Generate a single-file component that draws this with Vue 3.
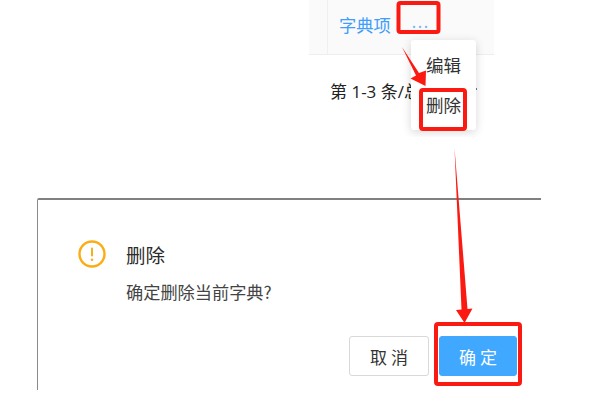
<template>
  <div class="page">
    <div class="table-crop">
      <div class="table-head">
        <a class="link">字典项</a>
        <span class="more">...</span>
      </div>
      <div class="pager-row">
        <span class="pager">第 1-3 条/总</span>
        <i class="pager-end"></i>
      </div>
      <ul class="menu">
        <li>编辑</li>
        <li>删除</li>
      </ul>
    </div>

    <div class="dialog">
      <div class="dialog-title">
        <svg class="warn" width="28" height="28" viewBox="0 0 28 28">
          <circle cx="14" cy="14" r="12.5" fill="none" stroke="#faad14" stroke-width="2.4" />
          <rect x="13" y="7.5" width="2" height="9" rx="1" fill="#faad14" />
          <circle cx="14" cy="19.8" r="1.3" fill="#faad14" />
        </svg>
        <span>删除</span>
      </div>
      <p class="dialog-msg">确定删除当前字典?</p>
      <div class="dialog-actions">
        <button class="btn">取 消</button>
        <button class="btn primary">确 定</button>
      </div>
    </div>

    <!-- red annotations drawn on top of the screenshot -->
    <svg class="marks" width="614" height="406" viewBox="0 0 614 406">
      <g fill="none" stroke="#fb1a12" stroke-width="4" stroke-linejoin="round">
        <rect x="398.500" y="3" width="40" height="29" rx="2" />
        <rect x="421" y="90" width="44" height="39" rx="2" />
        <rect x="436" y="324" width="84" height="60" rx="2" />
      </g>
      <g fill="#fb1a12">
        <path d="M402 47 L419 73 L426 70.500 L425.500 86 L410.500 78.500 L416 75.500 Z" />
        <path d="M454.500 148 L467.500 309 L472.500 308.500 L464.500 323 L456 310 L461.500 309.500 Z" />
      </g>
    </svg>
  </div>
</template>

<script setup>
</script>

<style>
html,
body {
  margin: 0;
  background: #fff;
}
</style>

<style scoped>
.page {
  position: relative;
  width: 614px;
  height: 406px;
  overflow: hidden;
  background: #fff;
  font-family: "Noto Sans CJK SC", "Noto Sans", sans-serif;
  color: #333;
}

.marks {
  position: absolute;
  left: 0;
  top: 0;
}

.table-crop {
  position: relative;
  width: 185px;
  height: 137px;
  margin-left: 309px;
  overflow: hidden;
}

.table-head {
  display: flex;
  align-items: center;
  gap: 21px;
  height: 55px;
  padding: 0 0 5px 30px;
  box-sizing: border-box;
  background: #fafafa;
  border-bottom: 1px solid #eee;
  position: relative;
}

.table-head::before {
  content: "";
  position: absolute;
  left: 18px;
  top: 0;
  bottom: 0;
  width: 1px;
  background: #f0f0f0;
}

.link {
  color: #3f9dfb;
  font-size: 17.300px;
}

.more {
  color: #6db6fb;
  font-size: 16px;
  letter-spacing: 1.500px;
  line-height: 1;
  margin-top: -8px;
}

.pager-row {
  display: flex;
  align-items: center;
  justify-content: space-between;
  height: 26px;
  margin: 22px 17px 0 21px;
}

.pager {
  width: 81px;
  overflow: hidden;
  font-family: "Open Sans", "Noto Sans CJK SC", sans-serif;
  font-size: 17px;
  color: #222;
  white-space: nowrap;
}

.pager-end {
  width: 2px;
  height: 2px;
  margin-top: -3px;
  background: #6b7f99;
}

.menu {
  position: absolute;
  left: 102px;
  top: 40px;
  width: 65px;
  height: 90px;
  margin: 0;
  padding: 5px 0;
  box-sizing: border-box;
  list-style: none;
  background: #fff;
  border-radius: 3px;
  box-shadow: 0 2px 10px rgba(0, 0, 0, 0.16);
  font-size: 17.500px;
  text-align: center;
}

.menu li {
  height: 40px;
  line-height: 40px;
}

.dialog {
  width: 504px;
  height: 192px;
  margin: 61px 0 0 37px;
  border-top: 2px solid #808080;
  border-left: 1px solid #8a8a8a;
  border-top-left-radius: 2px;
  box-sizing: border-box;
}

.dialog-title {
  display: flex;
  align-items: center;
  height: 28px;
  margin: 40px 0 0 40px;
  font-size: 19.500px;
  color: #2b2b2b;
}

.warn {
  margin-right: 20px;
}

.dialog-msg {
  margin: 11px 0 0 88px;
  font-size: 17.200px;
  line-height: 25px;
  color: #444;
}

.dialog-actions {
  display: flex;
  justify-content: flex-end;
  gap: 10px;
  margin: 32px 24px 0 0;
}

.btn {
  width: 80px;
  height: 40px;
  padding: 0;
  border: 1px solid #d9d9d9;
  border-radius: 3px;
  background: #fff;
  color: #333;
  font-family: inherit;
  font-size: 17px;
}

.btn.primary {
  width: 78px;
  border-color: #40a9ff;
  background: #40a9ff;
  color: #fff;
}
</style>
